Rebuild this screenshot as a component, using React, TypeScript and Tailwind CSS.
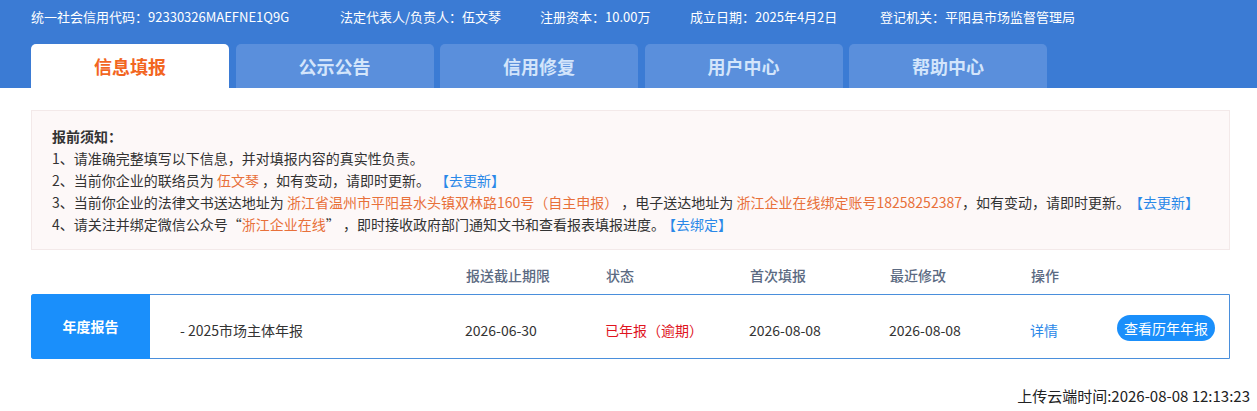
const FONT = "font-['Noto_Sans_CJK_SC','Noto_Sans',sans-serif]"

const INFO = [
    { label: "统一社会信用代码：", value: "92330326MAEFNE1Q9G", w: "w-[309px]" },
    { label: "法定代表人/负责人：", value: "伍文琴", w: "w-[200px]" },
    { label: "注册资本：", value: "10.00万", w: "w-[150px]" },
    { label: "成立日期：", value: "2025年4月2日", w: "w-[190px]" },
    { label: "登记机关：", value: "平阳县市场监督管理局", w: "" },
]

const TABS = ["信息填报", "公示公告", "信用修复", "用户中心", "帮助中心"]

const COLUMNS = [
    { title: "报送截止期限", w: "w-[140px]" },
    { title: "状态", w: "w-[144px]" },
    { title: "首次填报", w: "w-[140px]" },
    { title: "最近修改", w: "w-[141px]" },
    { title: "操作", w: "w-[80px]" },
]

export default function App() {
    return (
        <div className={`${FONT} w-[1257px] min-h-[411px] bg-white text-[#333]`}>
            {/* top bar */}
            <div className="bg-[#3b7bd4] h-[88px] pl-[31px]">
                <div className="h-[34px] flex items-center text-[13px] text-white">
                    {INFO.map((it) => (
                        <span key={it.label} className={`shrink-0 ${it.w}`}>{it.label}{it.value}</span>
                    ))}
                </div>
                <div className="mt-[10px] flex gap-[6.5px]">
                    {TABS.map((t, i) => (
                        <div
                            key={t}
                            className={`w-[198px] h-[44px] rounded-t-[5px] flex items-center justify-center text-[18px] font-bold ${i === 0 ? "bg-white text-[#f2661f]" : "bg-[#5a8fdc] text-[#d3e5fb]"}`}
                        >
                            {t}
                        </div>
                    ))}
                </div>
            </div>

            <div className="pl-[31px] pr-[27px]">
                {/* notice */}
                <div className="mt-[22px] border border-[#f3e9e9] bg-[#fdf8f8] pl-[20px] pt-[14px] pb-[14px] text-[14px] leading-[22px] text-[#333]">
                    <p className="font-bold">报前须知：</p>
                    <p>1、请准确完整填写以下信息，并对填报内容的真实性负责。</p>
                    <p>
                        2、当前你企业的联络员为 <span className="text-[#e8703a]">伍文琴</span> ，如有变动，请即时更新。
                        <span className="text-[#2a88e8] ml-[12px]">【去更新】</span>
                    </p>
                    <p>
                        3、当前你企业的法律文书送达地址为 <span className="text-[#e8703a]">浙江省温州市平阳县水头镇双林路160号（自主申报）</span> ，电子送达地址为 <span className="text-[#e8703a]">浙江企业在线绑定账号18258252387</span>，如有变动，请即时更新。
                        <span className="text-[#2a88e8] ml-[6px]">【去更新】</span>
                    </p>
                    <p>
                        4、请关注并绑定微信公众号“<span className="text-[#e8703a]">浙江企业在线</span>” ，即时接收政府部门通知文书和查看报表填报进度。
                        <span className="text-[#2a88e8] ml-[4px]">【去绑定】</span>
                    </p>
                </div>

                {/* table head */}
                <div className="mt-[14px] mb-[8px] h-[22px] flex items-center text-[14px] font-medium text-[#5b6a82]">
                    <div className="w-[435px]" />
                    {COLUMNS.map((c) => (
                        <div key={c.title} className={c.w}>{c.title}</div>
                    ))}
                </div>

                {/* report row */}
                <div className="h-[65px] flex border border-[#4a8fdc] rounded-l-[3px] text-[14px]">
                    <div className="w-[119px] -ml-px -my-px bg-[#1a8ffb] rounded-l-[3px] flex items-center justify-center text-white font-bold">
                        年度报告
                    </div>
                    <div className="w-[315px] pl-[30px] flex items-center pt-[7px]">- 2025市场主体年报</div>
                    <div className="w-[140px] flex items-center pt-[7px]">2026-06-30</div>
                    <div className="w-[144px] flex items-center pt-[7px] text-[#e0141e]">已年报（逾期）</div>
                    <div className="w-[140px] flex items-center pt-[7px]">2026-08-08</div>
                    <div className="w-[141px] flex items-center pt-[7px]">2026-08-08</div>
                    <div className="w-[87px] flex items-center pt-[7px] text-[#2a88e8]">详情</div>
                    <div className="flex items-center pt-[3px]">
                        <button className="h-[26px] px-[7px] rounded-full bg-[#1a8ffb] text-white text-[14px] leading-[26px]">
                            查看历年年报
                        </button>
                    </div>
                </div>
            </div>

            <div className="mt-[26px] pr-[7px] flex justify-end text-[15px] text-[#222]">
                上传云端时间:2026-08-08 12:13:23
            </div>
        </div>
    )
}
